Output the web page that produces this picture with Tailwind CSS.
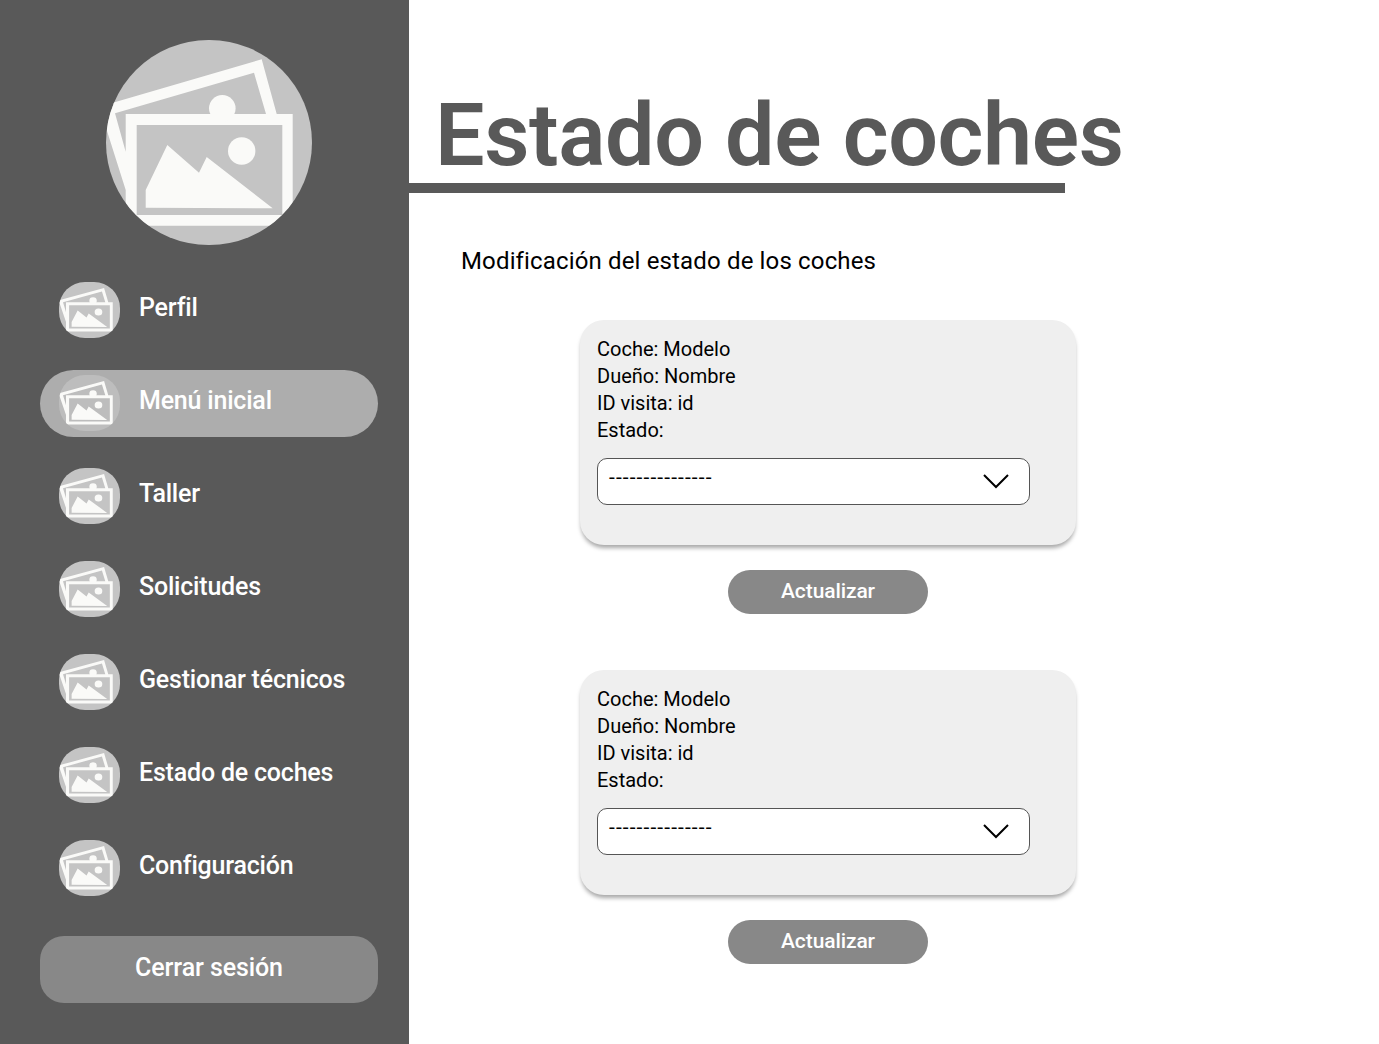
<!DOCTYPE html>
<html lang="es">
<head>
<meta charset="utf-8">
<title>Estado de coches</title>
<script src="https://cdn.jsdelivr.net/npm/@tailwindcss/browser@4"></script>
</head>
<body class="bg-white font-['Roboto',sans-serif]">

<!-- icono de imagen reutilizado -->
<svg class="hidden">
    <symbol id="pic" viewBox="0 0 206 205" overflow="visible">
        <path fill="#fafaf8" fill-rule="evenodd" d="M-6.6 66.8 155.7 19.3 170.7 74H186.7V185.7H19.7V150ZM9 73.3 19.7 111.7V74H160L148 32.7ZM30.7 85V175H176.3V85Z"/>
        <circle cx="116.3" cy="68.3" r="13.3" fill="#fafaf8"/>
        <circle cx="135.7" cy="111" r="13.7" fill="#fafaf8"/>
        <path fill="#fafaf8" d="M39.7 167.7V150L61.3 105 93 132.7 100.7 117 166.7 168.3Z"/>
    </symbol>
</svg>

<div class="flex h-[1044px] w-[1379px] overflow-hidden">

    <!-- menú lateral -->
    <aside class="flex w-[409px] shrink-0 flex-col bg-[#595959] pl-[40px] pr-[31px] pt-[40px]">
        <div class="mx-auto h-[205px] w-[206px] overflow-hidden rounded-full bg-[#c4c4c4]">
            <svg class="h-full w-full"><use href="#pic"/></svg>
        </div>

        <nav class="mt-[32px] flex flex-col gap-[26px]">
            <a class="flex h-[67px] items-start gap-[19px] rounded-full pl-[19px] pt-[5px] text-[25px] font-medium tracking-[-0.2px] text-white">
                <span class="h-[56px] w-[61px] shrink-0 overflow-hidden rounded-[26px] bg-[#c4c4c4]"><svg class="h-full w-full" viewBox="-5.4 -4 218 215" preserveAspectRatio="none"><use href="#pic" width="206" height="205"/></svg></span>
                <span class="leading-[51px]">Perfil</span>
            </a>
            <a class="flex h-[67px] items-start gap-[19px] rounded-full bg-[#adadad] pl-[19px] pt-[5px] text-[25px] font-medium tracking-[-0.2px] text-white">
                <span class="h-[56px] w-[61px] shrink-0 overflow-hidden rounded-[26px] bg-[#bdbdbd]"><svg class="h-full w-full" viewBox="-5.4 -4 218 215" preserveAspectRatio="none"><use href="#pic" width="206" height="205"/></svg></span>
                <span class="leading-[51px]">Menú inicial</span>
            </a>
            <a class="flex h-[67px] items-start gap-[19px] rounded-full pl-[19px] pt-[5px] text-[25px] font-medium tracking-[-0.2px] text-white">
                <span class="h-[56px] w-[61px] shrink-0 overflow-hidden rounded-[26px] bg-[#c4c4c4]"><svg class="h-full w-full" viewBox="-5.4 -4 218 215" preserveAspectRatio="none"><use href="#pic" width="206" height="205"/></svg></span>
                <span class="leading-[51px]">Taller</span>
            </a>
            <a class="flex h-[67px] items-start gap-[19px] rounded-full pl-[19px] pt-[5px] text-[25px] font-medium tracking-[-0.2px] text-white">
                <span class="h-[56px] w-[61px] shrink-0 overflow-hidden rounded-[26px] bg-[#c4c4c4]"><svg class="h-full w-full" viewBox="-5.4 -4 218 215" preserveAspectRatio="none"><use href="#pic" width="206" height="205"/></svg></span>
                <span class="leading-[51px]">Solicitudes</span>
            </a>
            <a class="flex h-[67px] items-start gap-[19px] rounded-full pl-[19px] pt-[5px] text-[25px] font-medium tracking-[-0.2px] text-white">
                <span class="h-[56px] w-[61px] shrink-0 overflow-hidden rounded-[26px] bg-[#c4c4c4]"><svg class="h-full w-full" viewBox="-5.4 -4 218 215" preserveAspectRatio="none"><use href="#pic" width="206" height="205"/></svg></span>
                <span class="leading-[51px]">Gestionar técnicos</span>
            </a>
            <a class="flex h-[67px] items-start gap-[19px] rounded-full pl-[19px] pt-[5px] text-[25px] font-medium tracking-[-0.2px] text-white">
                <span class="h-[56px] w-[61px] shrink-0 overflow-hidden rounded-[26px] bg-[#c4c4c4]"><svg class="h-full w-full" viewBox="-5.4 -4 218 215" preserveAspectRatio="none"><use href="#pic" width="206" height="205"/></svg></span>
                <span class="leading-[51px]">Estado de coches</span>
            </a>
            <a class="flex h-[67px] items-start gap-[19px] rounded-full pl-[19px] pt-[5px] text-[25px] font-medium tracking-[-0.2px] text-white">
                <span class="h-[56px] w-[61px] shrink-0 overflow-hidden rounded-[26px] bg-[#c4c4c4]"><svg class="h-full w-full" viewBox="-5.4 -4 218 215" preserveAspectRatio="none"><use href="#pic" width="206" height="205"/></svg></span>
                <span class="leading-[51px]">Configuración</span>
            </a>
        </nav>

        <button class="mt-[34px] h-[67px] rounded-[24px] bg-[#888888] pb-[3px] text-[25px] font-medium tracking-[-0.1px] text-white">Cerrar sesión</button>
    </aside>

    <!-- contenido -->
    <main class="flex-1">
        <div class="h-[193px] w-[656px] border-b-[10px] border-[#595959]">
            <h1 class="whitespace-nowrap pl-[26px] pt-[79px] text-[88px] font-semibold leading-[112px] tracking-[-0.4px] text-[#595959]">Estado de coches</h1>
        </div>

        <p class="mt-[50px] pl-[52px] text-[24px] leading-[36px] tracking-[0.15px] text-black">Modificación del estado de los coches</p>

        <!-- tarjeta 1 -->
        <section class="ml-[171px] mt-[41px] w-[496px]">
            <div class="h-[225px] rounded-[24px] bg-[#efefef] px-[17px] pt-[16px] text-[20px] leading-[27px] text-black shadow-[0_4px_4px_-1px_rgba(0,0,0,0.35)]">
                <p>Coche: Modelo</p>
                <p>Dueño: Nombre</p>
                <p>ID visita: id</p>
                <p>Estado:</p>
                <div class="mt-[14px] flex h-[47px] w-[433px] items-start justify-between rounded-[10px] border border-[#555555] bg-white pl-[11px] pr-[20px]">
                    <span class="text-[21px] leading-[37px] tracking-[1.1px]">---------------</span>
                    <svg class="mt-[15px]" width="26" height="15" viewBox="0 0 26 15" fill="none" stroke="#000" stroke-width="2"><path d="M1 1 13 13 25 1"/></svg>
                </div>
            </div>
            <button class="mx-auto mt-[25px] block h-[44px] w-[200px] rounded-full bg-[#888888] text-[21px] font-medium tracking-[-0.1px] text-white">Actualizar</button>
        </section>

        <!-- tarjeta 2 -->
        <section class="ml-[171px] mt-[56px] w-[496px]">
            <div class="h-[225px] rounded-[24px] bg-[#efefef] px-[17px] pt-[16px] text-[20px] leading-[27px] text-black shadow-[0_4px_4px_-1px_rgba(0,0,0,0.35)]">
                <p>Coche: Modelo</p>
                <p>Dueño: Nombre</p>
                <p>ID visita: id</p>
                <p>Estado:</p>
                <div class="mt-[14px] flex h-[47px] w-[433px] items-start justify-between rounded-[10px] border border-[#555555] bg-white pl-[11px] pr-[20px]">
                    <span class="text-[21px] leading-[37px] tracking-[1.1px]">---------------</span>
                    <svg class="mt-[15px]" width="26" height="15" viewBox="0 0 26 15" fill="none" stroke="#000" stroke-width="2"><path d="M1 1 13 13 25 1"/></svg>
                </div>
            </div>
            <button class="mx-auto mt-[25px] block h-[44px] w-[200px] rounded-full bg-[#888888] text-[21px] font-medium tracking-[-0.1px] text-white">Actualizar</button>
        </section>
    </main>
</div>
</body>
</html>
